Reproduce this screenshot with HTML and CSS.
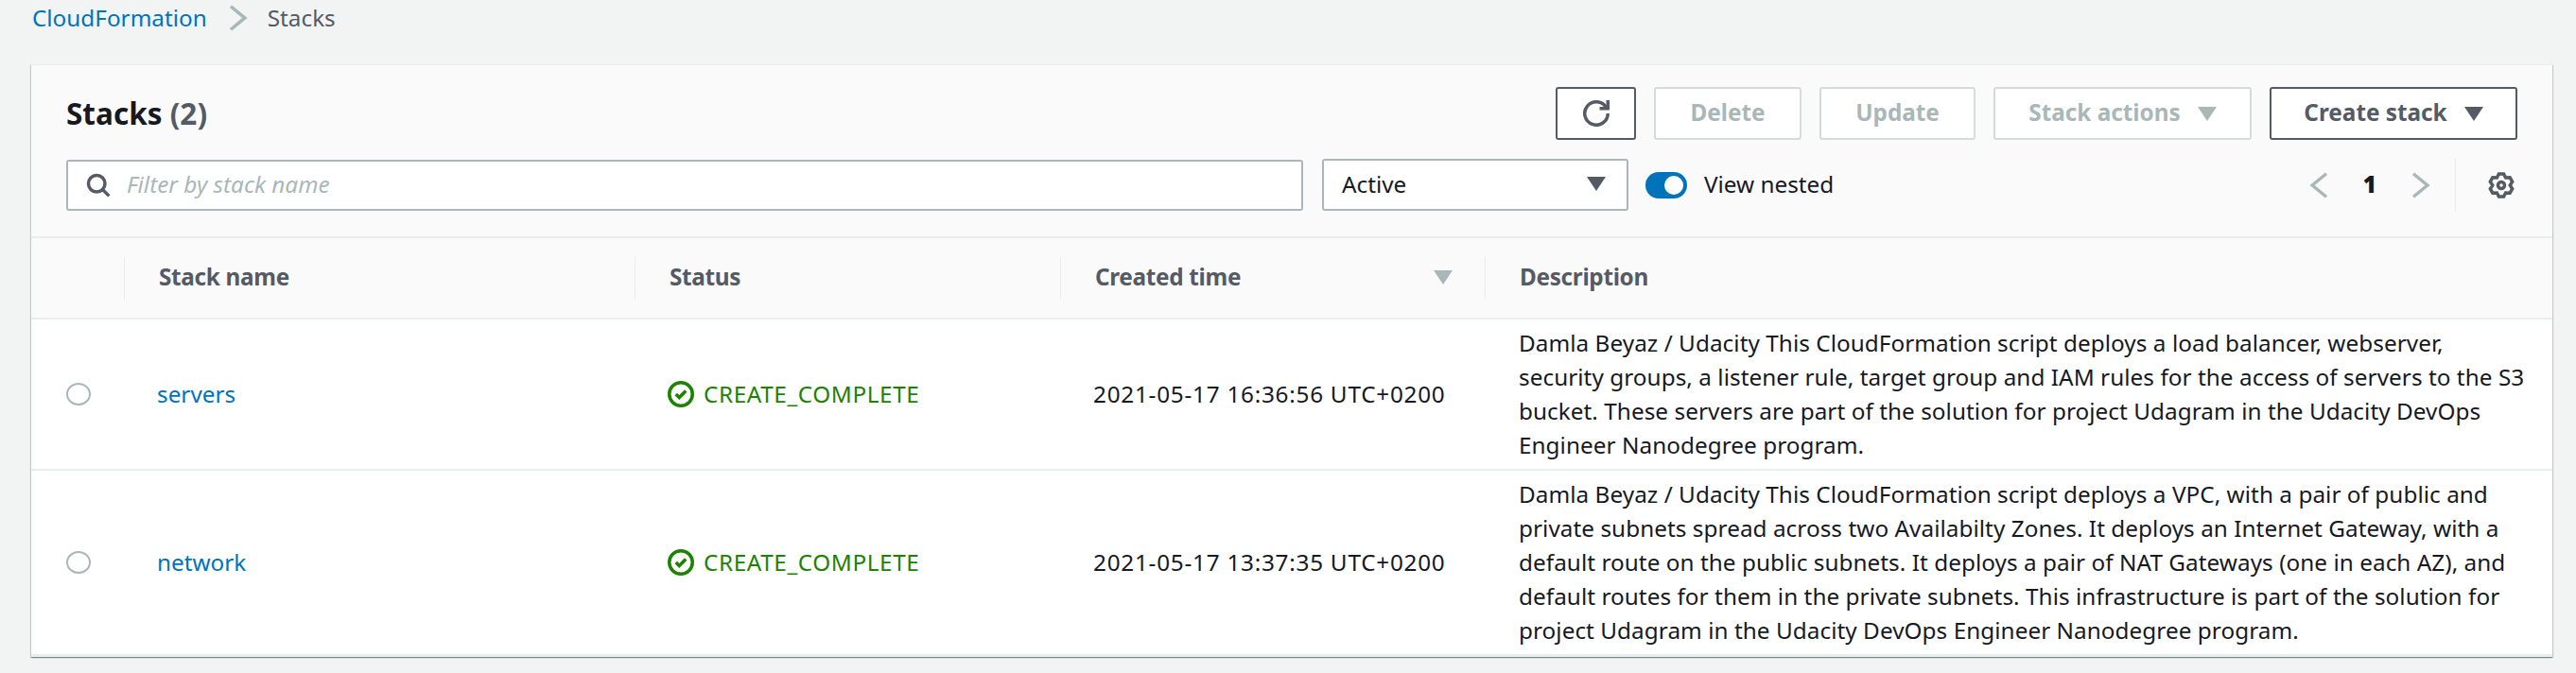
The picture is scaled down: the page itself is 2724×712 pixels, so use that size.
FILE: index.html
```html
<!DOCTYPE html>
<html lang="en">
  <head>
    <meta charset="UTF-8" />
    <title>Stacks</title>
    <link rel="stylesheet" href="styles.css">
  </head>
  <body>
    <nav class="breadcrumb">
      <a href="#" class="link">CloudFormation</a>
      <svg class="icon crumb-sep" viewBox="0 0 16 16"><path d="M4 1l8.5 7L4 15" /></svg>
      <span>Stacks</span>
    </nav>

    <section class="panel">
      <div class="panel-head">
        <div class="head-row">
          <h1>Stacks <span class="count">(2)</span></h1>
          <div class="actions">
            <button class="btn btn-icon">
              <svg class="icon" viewBox="0 0 16 16"><path d="M10 5h5V0" /><path d="M15 8a7 7 0 1 1-.93-3.5" /></svg>
            </button>
            <button class="btn btn-delete" disabled>Delete</button>
            <button class="btn btn-update" disabled>Update</button>
            <button class="btn btn-stack-actions" disabled>Stack actions <i class="caret"></i></button>
            <button class="btn btn-create">Create stack <i class="caret"></i></button>
          </div>
        </div>
        <div class="filter-row">
          <div class="search">
            <svg class="icon" viewBox="0 0 16 16"><circle cx="7" cy="7" r="5" /><path d="M14.5 14.5l-4-4" /></svg>
            <span>Filter by stack name</span>
          </div>
          <div class="select">Active <i class="caret"></i></div>
          <div class="toggle"><i class="knob"></i></div>
          <span class="toggle-label">View nested</span>
          <div class="pager">
            <svg class="icon" viewBox="0 0 16 16"><path d="M12 1L3.5 8l8.5 7" /></svg>
            <b>1</b>
            <svg class="icon" viewBox="0 0 16 16"><path d="M4 1l8.5 7L4 15" /></svg>
          </div>
          <div class="prefs">
            <svg class="icon" viewBox="0 0 16 16">
              <path d="M6.54 1.15h2.92l1.19 2.26 2.55-.09 1.46 2.52L13.3 8l1.36 2.16-1.46 2.52-2.55-.09-1.19 2.26H6.54l-1.19-2.26-2.55.09-1.46-2.52L2.7 8 1.34 5.84 2.8 3.32l2.55.09z" />
              <circle cx="8" cy="8" r="2" />
            </svg>
          </div>
        </div>
      </div>

      <table>
        <colgroup>
          <col class="col-radio" />
          <col class="col-name" />
          <col class="col-status" />
          <col class="col-time" />
          <col />
        </colgroup>
        <thead>
          <tr>
            <th></th>
            <th><div class="th-inner">Stack name</div></th>
            <th><div class="th-inner">Status</div></th>
            <th><div class="th-inner">Created time <i class="caret"></i></div></th>
            <th><div class="th-inner">Description</div></th>
          </tr>
        </thead>
        <tbody>
          <tr>
            <td><i class="radio"></i></td>
            <td class="name"><a href="#" class="link">servers</a></td>
            <td>
              <span class="status">
                <svg class="icon" viewBox="0 0 16 16"><circle cx="8" cy="8" r="7" /><path d="M5 8l2 2 4-4" /></svg>
                CREATE_COMPLETE
              </span>
            </td>
            <td class="time">2021-05-17 16:36:56 UTC+0200</td>
            <td class="desc">Damla Beyaz / Udacity This CloudFormation script deploys a load balancer, webserver,<br>security groups, a listener rule, target group and IAM rules for the access of servers to the S3<br>bucket. These servers are part of the solution for project Udagram in the Udacity DevOps<br>Engineer Nanodegree program.</td>
          </tr>
          <tr>
            <td><i class="radio"></i></td>
            <td class="name"><a href="#" class="link">network</a></td>
            <td>
              <span class="status">
                <svg class="icon" viewBox="0 0 16 16"><circle cx="8" cy="8" r="7" /><path d="M5 8l2 2 4-4" /></svg>
                CREATE_COMPLETE
              </span>
            </td>
            <td class="time">2021-05-17 13:37:35 UTC+0200</td>
            <td class="desc">Damla Beyaz / Udacity This CloudFormation script deploys a VPC, with a pair of public and<br>private subnets spread across two Availabilty Zones. It deploys an Internet Gateway, with a<br>default route on the public subnets. It deploys a pair of NAT Gateways (one in each AZ), and<br>default routes for them in the private subnets. This infrastructure is part of the solution for<br>project Udagram in the Udacity DevOps Engineer Nanodegree program.</td>
          </tr>
        </tbody>
      </table>
    </section>
  </body>
</html>
```
FILE: styles.css
```css
body {
  font-family: "Noto Sans", sans-serif;
  font-size: 24.3px;
  line-height: 36px;
  color: #16191f;
  background-color: #f2f3f3;
  margin: 0;
  height: 712px;
  overflow: hidden;
}

.link {
  color: #0073bb;
  text-decoration: none;
}

.icon {
  display: block;
  width: 28px;
  height: 28px;
  fill: none;
  stroke: #545b64;
  stroke-width: 2;
  flex-shrink: 0;
}

.caret {
  display: inline-block;
  width: 0;
  height: 0;
  border-left: 10px solid transparent;
  border-right: 10px solid transparent;
  border-top: 15px solid #545b64;
}

/* breadcrumb */
.breadcrumb {
  display: flex;
  align-items: center;
  gap: 18px;
  height: 38px;
  padding: 0 0 30px 34px;
  color: #545b64;
}

.crumb-sep {
  stroke: #aab7b8;
}

/* panel */
.panel {
  margin: 0 25px 0 33px;
  background: white;
  border-top: 1px solid #eaeded;
  box-shadow: 0 1px 1px 0 rgba(0, 28, 36, 0.3), 1px 1px 1px 0 rgba(0, 28, 36, 0.15), -1px 1px 1px 0 rgba(0, 28, 36, 0.15);
}

.panel-head {
  background: #fafafa;
  padding: 23px 37px 27px 37px;
}

.head-row {
  display: flex;
  justify-content: space-between;
  align-items: center;
  height: 56px;
  margin-bottom: 20px;
}

h1 {
  margin: 0;
  font-size: 31.5px;
  line-height: 44px;
  font-weight: 700;
}

.count {
  color: #545b64;
}

.actions {
  display: flex;
  gap: 19px;
}

.btn {
  display: flex;
  align-items: center;
  justify-content: center;
  gap: 18px;
  height: 56px;
  padding: 0 0 3px;
  font-family: inherit;
  font-size: 24.3px;
  font-weight: 700;
  color: #545b64;
  background: white;
  border: 2px solid #545b64;
  border-radius: 3px;
}

.btn:disabled {
  color: #aab7b8;
  border-color: #d5dbdb;
}

.btn:disabled .caret {
  border-top-color: #aab7b8;
}

.btn .caret {
  margin-top: 3px;
}

.btn-icon {
  width: 85px;
  padding: 0;
}

.btn-delete {
  width: 156px;
}

.btn-update {
  width: 165px;
}

.btn-stack-actions {
  width: 273px;
}

.btn-create {
  width: 262px;
}

.filter-row {
  display: flex;
  align-items: center;
  height: 55px;
}

.search {
  display: flex;
  align-items: center;
  gap: 16px;
  box-sizing: border-box;
  width: 1308px;
  height: 54px;
  padding: 0 18px;
  background: white;
  border: 2px solid #aab7b8;
  border-radius: 3px;
  color: #aab7b8;
  font-style: italic;
}

.search span {
  margin-bottom: 2px;
}

.select {
  display: flex;
  align-items: center;
  justify-content: space-between;
  box-sizing: border-box;
  width: 324px;
  height: 55px;
  margin-left: 20px;
  padding: 0 22px 2px 19px;
  background: white;
  border: 2px solid #aab7b8;
  border-radius: 3px;
}

.toggle {
  box-sizing: border-box;
  width: 44px;
  height: 28px;
  margin-left: 18px;
  padding: 4px 4px 4px 20px;
  background: #0073bb;
  border-radius: 14px;
}

.knob {
  display: block;
  width: 20px;
  height: 20px;
  background: white;
  border-radius: 50%;
}

.toggle-label {
  margin-left: 18px;
  margin-bottom: 2px;
}

.pager {
  display: flex;
  align-items: center;
  gap: 32px;
  margin-left: auto;
  font-weight: 700;
}

.pager b {
  margin-bottom: 2px;
}

.pager .icon {
  stroke: #aab7b8;
}

.prefs {
  display: flex;
  align-items: center;
  height: 56px;
  margin-left: 23px;
  margin-right: 3px;
  padding-left: 34px;
  border-left: 1px solid #eaeded;
}

/* table */
table {
  width: 100%;
  table-layout: fixed;
  border-collapse: collapse;
}

.col-radio {
  width: 98px;
}

.col-name {
  width: 540px;
}

.col-status {
  width: 450px;
}

.col-time {
  width: 449px;
}

th {
  height: 84px;
  padding: 0;
  background: #fafafa;
  border-top: 2px solid #eaeded;
  border-bottom: 2px solid #eaeded;
  color: #545b64;
  text-align: left;
  font-weight: 700;
}

.th-inner {
  display: flex;
  align-items: center;
  justify-content: space-between;
  height: 43px;
  padding: 0 34px 2px 36px;
  letter-spacing: -0.3px;
  border-left: 1px solid #eaeded;
}

.th-inner .caret {
  border-top-color: #aab7b8;
}

td {
  padding: 0 0 0 35px;
  border-bottom: 2px solid #eaeded;
  vertical-align: middle;
}

td:first-child {
  padding-left: 37px;
}

.radio {
  display: block;
  box-sizing: border-box;
  width: 26px;
  height: 24px;
  border: 2px solid #aab7b8;
  border-radius: 50%;
}

.status {
  display: flex;
  align-items: center;
  gap: 10px;
  color: #1d8102;
  letter-spacing: 0.6px;
}

.status .icon {
  stroke: #1d8102;
}

.time {
  letter-spacing: 0.75px;
}

.desc {
  padding: 7px 20px 7px 36px;
  letter-spacing: 0.05px;
}

tbody tr:last-child td {
  border-bottom: 3px solid #eaeded;
}
```
